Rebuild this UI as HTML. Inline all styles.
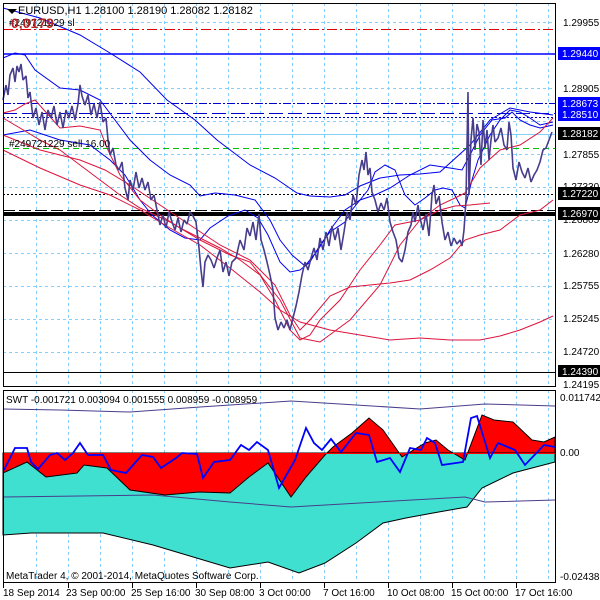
<!DOCTYPE html>
<html><head><meta charset="utf-8"><style>
html,body{margin:0;padding:0;background:#fff;width:600px;height:600px;overflow:hidden}
svg{display:block;font-family:"Liberation Sans",sans-serif}
</style></head><body>
<svg width="600" height="600" viewBox="0 0 600 600" xmlns="http://www.w3.org/2000/svg">
<rect width="600" height="600" fill="#fff"/>
<g stroke="#87cefa" stroke-width="1" stroke-dasharray="3,3">
<path d="M36.5 3V387M68.5 3V387M100.5 3V387M132.5 3V387M164.5 3V387M196.5 3V387M228.5 3V387M260.5 3V387M292.5 3V387M324.5 3V387M356.5 3V387M388.5 3V387M420.5 3V387M452.5 3V387M484.5 3V387M516.5 3V387M548.5 3V387"/>
<path d="M3 22.5H555M3 88.5H555M3 121.5H555M3 154.5H555M3 187.5H555M3 220.5H555M3 253.5H555M3 286.5H555M3 319.5H555M3 352.5H555"/>
<path d="M36.5 390V582M68.5 390V582M100.5 390V582M132.5 390V582M164.5 390V582M196.5 390V582M228.5 390V582M260.5 390V582M292.5 390V582M324.5 390V582M356.5 390V582M388.5 390V582M420.5 390V582M452.5 390V582M484.5 390V582M516.5 390V582M548.5 390V582"/>
</g>
<path d="M3 29.5H555" stroke="#e00000" stroke-dasharray="10,3,2,3"/>
<path d="M3 54H555" stroke="#0000ff" stroke-width="1.5"/>
<path d="M3 103.5H555" stroke="#0000cc" stroke-dasharray="8,2,2,2"/>
<path d="M3 113.5H555" stroke="#0000cc" stroke-dasharray="14,5"/>
<path d="M3 117.5H555" stroke="#0000cc" stroke-dasharray="2,2"/>
<path d="M3 134.5H555" stroke="#87cefa"/>
<path d="M3 148.5H555" stroke="#00c000" stroke-dasharray="6,4"/>
<path d="M3 194.5H555" stroke="#000" stroke-dasharray="2,2"/>
<path d="M3 210.5H555" stroke="#000" stroke-dasharray="12,4"/>
<path d="M3 214H555" stroke="#000" stroke-width="4"/>
<path d="M3 372.5H555" stroke="#000"/>
<g fill="none" stroke="#0000ee" stroke-width="1">
<polyline points="3,8 40,18 80,35 110,53 140,72 167,100 195,120 217,140 250,165 275,178 297,193 310,196 330,197 345,195 360,186 380,178 400,175 420,174 440,172 470,145 490,120 510,108 530,112 553,115"/>
<polyline points="3,58 15,53 25,55 35,70 60,88 80,90 100,100 115,120 130,140 150,160 170,175 190,185 200,196 215,193 235,195 255,200 270,220 280,240 292,255 305,266 318,250 330,230 345,210 360,200 375,195 390,188 410,175 430,165 450,168 462,170 470,155 480,135 492,120 505,118 512,112 520,120 530,125 540,128 553,125"/>
<polyline points="3,135 30,130 60,140 90,145 110,160 125,175 140,200 152,215 170,230 185,238 200,240 210,228 228,216 245,210 258,218 268,235 280,262 290,272 300,270 310,262 320,245 330,232 345,222 352,210 360,200 368,190 375,172 385,165 395,170 405,195 415,205 425,198 435,190 443,188 452,190 460,205 465,208 472,180 478,160 490,135 500,120 510,110 520,112 530,118 540,125 553,122"/>
</g>
<g fill="none" stroke="#dc143c" stroke-width="1">
<polyline points="3,113 15,110 25,104 35,100 60,128 80,126 100,130 108,150 120,175 140,200 160,215 180,228 200,238 220,248 240,260 260,275 275,300 290,330 300,340 310,335 320,320 340,300 360,270 380,245 395,225 420,220 440,205 455,198 465,193 480,168 500,150 520,145 540,132 553,118"/>
<polyline points="3,135 40,150 80,160 105,170 130,185 160,205 190,225 220,245 250,260 275,285 290,315 300,330 310,320 330,296 350,287 370,285 390,283 410,280 430,270 450,258 465,240 480,235 500,230 520,215 540,210 553,200"/>
<polyline points="3,150 40,168 80,185 110,195 140,210 170,228 200,245 230,268 260,292 280,310 300,322 330,330 360,335 390,340 420,338 450,340 480,340 500,336 520,330 540,322 553,316"/>
<polyline points="3,118 20,128 40,140 60,150 80,165 100,180 120,195 140,208 170,222 200,240 230,255 250,262 280,300 300,338 320,342 350,320 380,285 400,245 420,220 440,210 455,206 470,205 490,203"/>
</g>
<polyline fill="none" stroke="#483d8b" stroke-width="1.6" stroke-linejoin="bevel" points="3,100 6,85 8,95 10,75 13,68 15,82 17,66 19,72 21,64 23,80 26,76 28,98 30,92 33,118 36,108 39,125 42,112 45,130 48,110 51,118 54,106 57,125 60,112 63,128 66,110 69,118 72,106 75,120 78,104 80,85 82,96 85,105 88,95 91,115 94,104 97,118 100,102 103,122 106,118 108,140 110,155 113,148 116,165 119,170 122,162 125,188 128,200 130,180 133,190 136,172 139,188 142,178 145,190 148,182 151,200 154,195 157,210 160,225 163,215 166,228 169,212 172,222 175,230 178,218 181,232 184,220 187,224 190,212 193,216 196,222 199,248 201,270 203,287 205,262 208,255 211,260 214,268 217,258 220,250 223,272 226,262 229,276 232,262 236,258 240,240 244,250 247,228 250,236 253,222 256,240 259,214 261,240 264,250 267,262 270,275 273,290 275,318 278,330 281,322 284,328 287,320 290,330 293,318 296,306 299,292 302,275 305,262 308,270 311,258 314,248 317,260 320,238 323,250 326,232 329,246 332,226 335,240 338,228 341,250 344,232 347,212 350,220 353,195 356,205 359,175 362,160 364,170 366,152 368,175 370,168 372,192 375,200 378,212 381,203 384,210 387,198 390,222 393,232 396,240 399,258 402,262 405,250 408,232 411,225 413,212 415,222 418,205 420,218 423,230 426,214 429,236 432,195 434,185 436,204 439,196 442,222 445,240 448,232 451,246 454,238 457,244 460,240 462,246 464,230 466,200 468,92 469,195 471,140 473,118 475,150 477,124 479,132 481,165 483,120 485,148 487,130 489,160 491,140 493,125 495,142 498,138 501,128 504,145 507,150 509,122 511,135 513,168 516,180 519,162 522,172 525,178 528,168 531,182 534,175 537,170 540,162 543,150 546,148 549,140 552,132"/>
<rect x="3.5" y="3.5" width="552" height="383" fill="none" stroke="#000"/>
<path d="M7 9l5 5 5-5z" fill="#000"/>
<text x="18" y="14" font-size="11" fill="#000">EURUSD,H1  1.28100 1.28190 1.28082 1.28182</text>
<text x="9" y="26" font-size="10" fill="#000">#249721229 sl</text>
<text x="11" y="28" font-size="14" font-weight="bold" fill="#b22222">0,0179</text>
<text x="9" y="147" font-size="10" fill="#000">#249721229 sell 16.00</text>
<g font-size="10" fill="#000">
<text x="563" y="26">1.29955</text>
<text x="563" y="92">1.28905</text>
<text x="563" y="158">1.27855</text>
<text x="563" y="190">1.27330</text>
<text x="563" y="223">1.26805</text>
<text x="563" y="257">1.26280</text>
<text x="563" y="289">1.25755</text>
<text x="563" y="322">1.25245</text>
<text x="563" y="355">1.24720</text>
<text x="563" y="388">1.24195</text>
</g>
<g font-size="10">
<rect x="558" y="47" width="42" height="13" fill="#0000ff"/><text x="562" y="57" fill="#fff">1.29440</text>
<rect x="558" y="97" width="42" height="24" fill="#0000ff"/><text x="562" y="107" fill="#fff">1.28673</text><text x="562" y="118" fill="#fff">1.28510</text>
<rect x="558" y="127" width="42" height="13" fill="#000"/><text x="562" y="137" fill="#fff">1.28182</text>
<rect x="558" y="187" width="42" height="13" fill="#000"/><text x="562" y="197" fill="#fff">1.27220</text>
<rect x="558" y="207" width="42" height="13" fill="#000"/><text x="562" y="217" fill="#fff">1.26970</text>
<rect x="558" y="365" width="42" height="12" fill="#000"/><text x="562" y="375" fill="#fff">1.24390</text>
</g>
<polygon fill="#40e0d0" stroke="#000" stroke-width="1" points="3,453 555,453 555,462 513,473 482,488 467,507 433,513 406,518 383,523 356,543 325,563 299,573 268,562 230,568 153,545 103,533 31,533 3,535"/>
<polygon fill="#ff0000" stroke="#000" stroke-width="1" points="3,453 3,473 27,462 46,477 77,473 84,465 107,468 130,490 165,495 199,492 230,493 249,477 268,463 291,497 306,477 325,455 333,447 352,433 369,418 383,430 402,457 425,443 436,440 448,450 465,460 482,415 494,420 513,422 532,440 544,442 555,437 555,453"/>
<path d="M3 453.5H555" stroke="#ff0000"/>
<g fill="none" stroke="#483d8b" stroke-width="1">
<polyline points="3,409 60,410 130,412 200,407 291,401 340,404 420,409 485,404 555,406"/>
<polyline points="3,497 80,496 153,495 230,502 291,507 360,503 430,499 465,497 485,502 555,500"/>
</g>
<polyline fill="none" stroke="#0000ff" stroke-width="1.8" points="4,470 15,448 27,448 31,462 38,469 50,455 57,453 65,460 73,453 80,443 88,455 103,455 111,470 126,473 142,455 153,457 161,468 176,458 182,453 197,454 203,478 214,462 230,460 241,445 249,450 257,442 268,450 279,488 295,460 306,428 314,443 322,450 331,439 341,452 356,433 369,435 377,462 390,458 400,472 410,448 421,450 427,438 435,443 442,465 463,462 471,418 477,416 490,458 498,443 515,450 525,465 544,445 555,447"/>
<rect x="3.5" y="390.5" width="552" height="192" fill="none" stroke="#000"/>
<text x="6" y="403" font-size="10" fill="#000">SWT -0.001721 0.003094 0.001555 0.008959 -0.008959</text>
<text x="6" y="579" font-size="10" fill="#000">MetaTrader 4, © 2001-2014, MetaQuotes Software Corp.</text>
<g font-size="10" fill="#000">
<text x="560" y="401">0.011742</text>
<text x="560" y="456">0.00</text>
<text x="560" y="580">-0.024383</text>
</g>
<path d="M3.5 583V588M68.5 583V588M132.5 583V588M196.5 583V588M260.5 583V588M324.5 583V588M388.5 583V588M452.5 583V588M516.5 583V588" stroke="#000"/>
<g font-size="10" fill="#000">
<text x="3" y="596">18 Sep 2014</text>
<text x="66" y="596">23 Sep 00:00</text>
<text x="131" y="596">25 Sep 16:00</text>
<text x="195" y="596">30 Sep 08:00</text>
<text x="259" y="596">3 Oct 00:00</text>
<text x="323" y="596">7 Oct 16:00</text>
<text x="387" y="596">10 Oct 08:00</text>
<text x="451" y="596">15 Oct 00:00</text>
<text x="515" y="596">17 Oct 16:00</text>
</g>
</svg>
</body></html>
